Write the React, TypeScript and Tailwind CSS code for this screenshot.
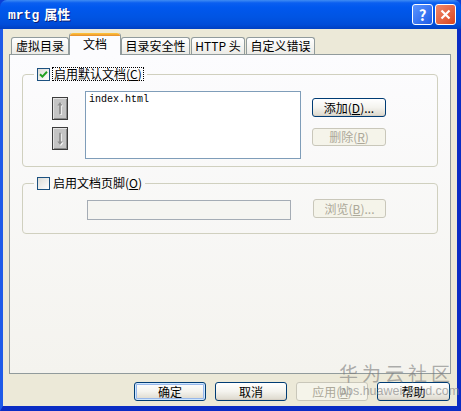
import type { ReactNode } from "react";

const cjk = { fontFamily: '"Noto Sans CJK SC", "Noto Sans", sans-serif' };

function XpButton({
  children,
  disabled,
  isDefault,
  className = "",
}: {
  children: ReactNode;
  disabled?: boolean;
  isDefault?: boolean;
  className?: string;
}) {
  if (disabled) {
    return (
      <div
        className={`flex items-center justify-center rounded-[3px] border border-[#c9c7ba] bg-[#f5f4ea] text-[12px] leading-none text-[#aca899] ${className}`}
      >
        {children}
      </div>
    );
  }
  return (
    <div
      className={`flex items-center justify-center rounded-[3px] border border-[#003c74] bg-gradient-to-b from-white via-[#f4f3ee] to-[#dcd8cc] text-[12px] leading-none text-black ${
        isDefault ? "shadow-[inset_0_0_0_1px_#cee7ff,inset_0_0_0_2px_#98b8ea]" : "shadow-[inset_0_-1px_0_#d6d0c5]"
      } ${className}`}
    >
      {children}
    </div>
  );
}

function Checkbox({ checked }: { checked?: boolean }) {
  return (
    <div className="flex h-[13px] w-[13px] shrink-0 items-center justify-center border border-[#1c5180] bg-gradient-to-br from-[#dcdcd7] to-white">
      {checked && (
        <svg width="9" height="9" viewBox="0 0 9 9">
          <path d="M1 4.2 L3.4 6.6 L8 1.8" fill="none" stroke="#21a121" strokeWidth="2" />
        </svg>
      )}
    </div>
  );
}

// small spin button beside the document list; dir decides the arrow direction
function MoveButton({ dir }: { dir: "up" | "down" }) {
  const d =
    dir === "up"
      ? "M8 4 L5 8 L7 8 L7 18 L9 18 L9 8 L11 8 Z"
      : "M8 19 L5 15 L7 15 L7 5 L9 5 L9 15 L11 15 Z";
  return (
    <div className="flex h-[23px] w-[16px] items-center justify-center border border-[#3c3c3c] bg-[#c4c4c4] shadow-[inset_1px_1px_0_#e4e4e4,inset_-1px_-1px_0_#8a8a8a]">
      <svg width="16" height="23" viewBox="0 0 16 23">
        <path d={d} fill="#fafafa" transform="translate(1 1)" />
        <path d={d} fill="#8c8c8c" />
      </svg>
    </div>
  );
}

function Tab({ label, active, className = "" }: { label: string; active?: boolean; className?: string }) {
  if (active) {
    return (
      <div
        className={`relative z-10 -mb-px flex h-[22px] flex-col rounded-t-[3px] border-x border-[#919b9c] bg-[#fcfcfe] ${className}`}
      >
        <div className="h-[3px] rounded-t-[3px] bg-gradient-to-b from-[#ffc83c] to-[#e68b2c]" />
        <div className="flex flex-1 items-start justify-center pt-[1px] text-[12px] leading-[14px]">{label}</div>
      </div>
    );
  }
  return (
    <div
      className={`flex h-[17px] items-center justify-center rounded-t-[3px] border-x border-t border-[#919b9c] bg-gradient-to-b from-white to-[#ecebe6] text-[12px] leading-none ${className}`}
    >
      {label}
    </div>
  );
}

export default function App() {
  return (
    <div
      className="relative flex h-[411px] w-[461px] flex-col overflow-hidden bg-[#0a3fd6] text-black"
      style={cjk}
    >
      {/* title bar */}
      <div className="flex h-[29px] shrink-0 items-center rounded-t-[7px] bg-[linear-gradient(180deg,#3f8cf3_0%,#0a5ff0_10%,#0058ee_25%,#0054e3_60%,#004cd8_85%,#003fc2_100%)] pl-[8px] pr-[5px]">
        <div className="flex items-baseline gap-[5px] text-white [text-shadow:1px_1px_0_#0a1e75]">
          <span className="text-[13px] font-bold" style={{ fontFamily: '"Liberation Mono", monospace' }}>
            mrtg
          </span>
          <span className="text-[13px] font-bold">属性</span>
        </div>
        <div className="ml-auto flex gap-[2px]">
          <div className="flex h-[21px] w-[21px] items-center justify-center rounded-[3px] border border-white bg-gradient-to-br from-[#5c95ff] to-[#1d5ae6] text-[15px] font-bold leading-none text-white">
            ?
          </div>
          <div className="flex h-[21px] w-[21px] items-center justify-center rounded-[3px] border border-white bg-gradient-to-br from-[#f0886a] to-[#d94218]">
            <svg width="11" height="11" viewBox="0 0 11 11">
              <path d="M1.5 1.5 L9.5 9.5 M9.5 1.5 L1.5 9.5" stroke="white" strokeWidth="2.2" />
            </svg>
          </div>
        </div>
      </div>

      {/* window body */}
      <div className="flex flex-1 flex-col border-b-[5px] border-l-[3px] border-r-[4px] border-b-[#0a2cc4] border-l-[#1e5ae8] border-r-[#0a2cc4] bg-[#ece9d8] px-[6px] pt-[4px]">
        {/* tab strip */}
        <div className="flex items-end pl-[2px]">
          <Tab label="虚拟目录" className="w-[58px]" />
          <Tab label="文档" active className="w-[52px]" />
          <Tab label="目录安全性" className="w-[69px]" />
          <Tab label="HTTP 头" className="ml-px w-[54px]" />
          <Tab label="自定义错误" className="ml-px w-[69px]" />
        </div>

        {/* tab page */}
        <div className="flex h-[320px] flex-col border border-[#919b9c] bg-gradient-to-b from-[#fcfcfe] to-[#f4f3ee] px-[12px] pt-[12px]">
          <fieldset className="m-0 rounded-[4px] border border-[#d0d0bf] p-0 pb-[7px]">
            <legend className="ml-[11px] px-[3px]">
              <div className="flex h-[14px] items-center gap-[2px]">
                <Checkbox checked />
                <span className="border border-dotted border-black px-px text-[12px] leading-[12px]">
                  启用默认文档(<u>C</u>)
                </span>
              </div>
            </legend>
            <div className="mt-[10px] flex items-start">
              <div className="ml-[29px] mt-[6px] flex flex-col gap-[7px]">
                <MoveButton dir="up" />
                <MoveButton dir="down" />
              </div>
              <div
                className="ml-[17px] h-[68px] w-[216px] border border-[#7f9db9] bg-white px-[3px] pt-[2px] text-[10px] leading-[12px]"
                style={{ fontFamily: '"Liberation Mono", monospace' }}
              >
                index.html
              </div>
              <div className="ml-[11px] mt-[7px] flex flex-col gap-[11px]">
                <XpButton className="h-[19px] w-[74px]">
                  添加(<u>D</u>)...
                </XpButton>
                <XpButton disabled className="h-[18px] w-[74px]">
                  删除(<u>R</u>)
                </XpButton>
              </div>
            </div>
          </fieldset>

          <fieldset className="m-0 mt-[9px] rounded-[4px] border border-[#d0d0bf] p-0 pb-[13px]">
            <legend className="ml-[11px] px-[3px]">
              <div className="flex h-[14px] items-center gap-[3px]">
                <Checkbox />
                <span className="text-[12px] leading-[12px]">
                  启用文档页脚(<u>O</u>)
                </span>
              </div>
            </legend>
            <div className="mt-[10px] flex items-start">
              <div className="ml-[64px] h-[20px] w-[204px] border border-[#a5acb5] bg-[#f6f5f1]" />
              <XpButton disabled className="ml-[22px] -mt-px h-[19px] w-[73px]">
                浏览(<u>B</u>)...
              </XpButton>
            </div>
          </fieldset>
        </div>

        {/* dialog buttons */}
        <div className="mt-[8px] flex justify-end gap-[9px] pr-px">
          <XpButton isDefault className="h-[19px] w-[72px]">
            确定
          </XpButton>
          <XpButton className="h-[19px] w-[72px]">取消</XpButton>
          <XpButton disabled className="h-[19px] w-[72px]">
            应用(<u>A</u>)
          </XpButton>
          <XpButton className="h-[19px] w-[73px]">帮助</XpButton>
        </div>
      </div>

      {/* site watermark */}
      <div className="pointer-events-none absolute left-[339px] top-[362px] flex w-[112px] flex-col items-start whitespace-nowrap">
        <span className="text-[19px] leading-[22px] tracking-[4px] text-[#7a7a7a]/60">华为云社区</span>
        <span
          className="text-[12.5px] leading-[14px] text-[#8a8a8a]/70"
          style={{ fontFamily: '"Liberation Sans", sans-serif' }}
        >
          bbs.huaweicloud.com
        </span>
      </div>
    </div>
  );
}
